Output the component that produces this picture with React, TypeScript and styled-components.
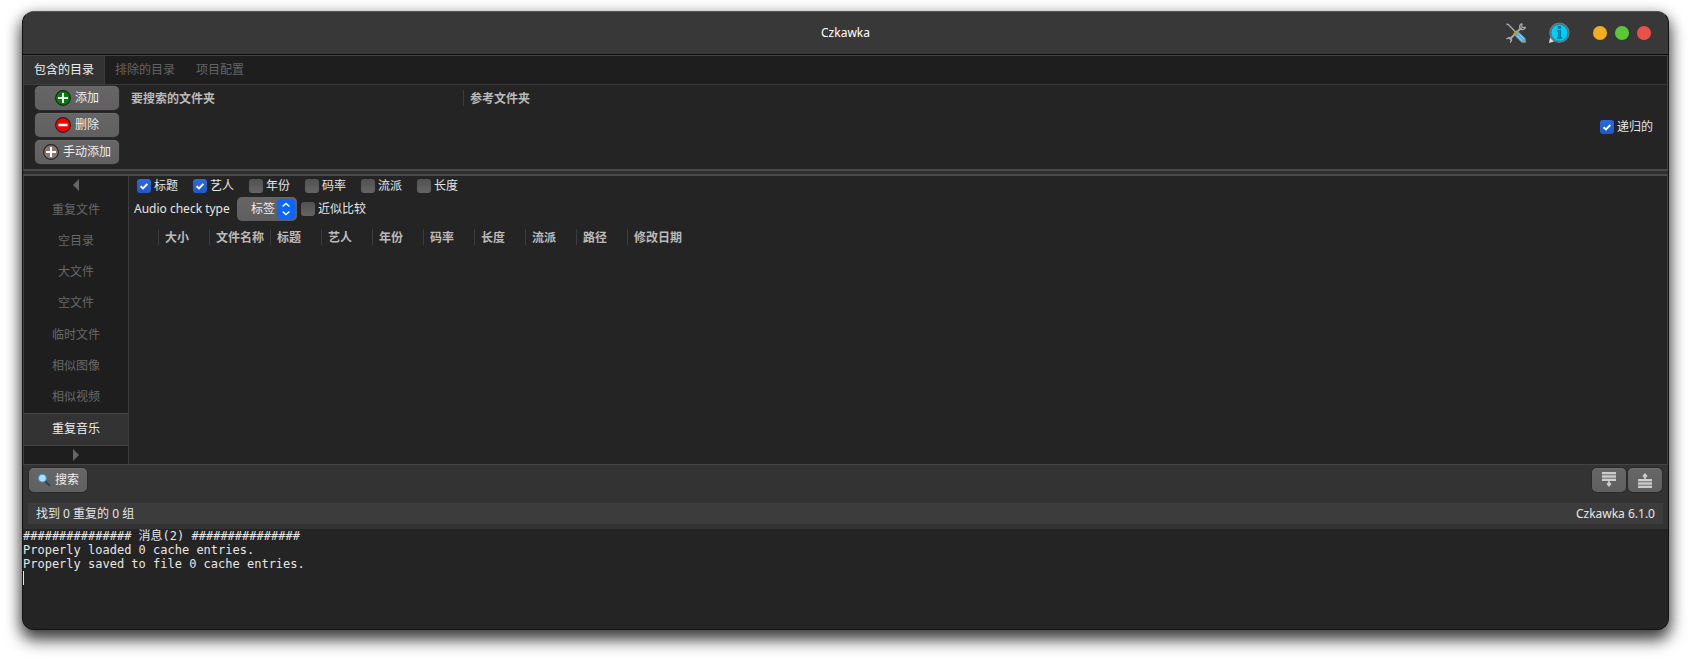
import React, { useState } from 'react';
import styled, { createGlobalStyle } from 'styled-components';

const GlobalStyle = createGlobalStyle`
  * { box-sizing: border-box; }
  body {
    margin: 0;
    background: #fff;
    color: #e6e6e6;
    font: 12px/16px "Noto Sans", "Noto Sans CJK SC", sans-serif;
  }
  button, select, textarea { font: inherit; color: inherit; margin: 0; padding: 0; border: 0; background: none; }
`;

const Window = styled.main`
  margin: 11px 22px 38px;
  border: 1px solid #121212;
  border-top-color: #565656;
  border-radius: 12px;
  overflow: hidden;
  background: #333;
  box-shadow: 0 9px 16px 1px rgba(0, 0, 0, 0.72), 0 2px 14px rgba(0, 0, 0, 0.2);
`;

const TitleBar = styled.header`
  display: grid;
  grid-template-columns: 1fr auto 1fr;
  align-items: center;
  height: 43px;
  padding: 0 17px;
  background: #383838;
  border-bottom: 1px solid #0c0c0c;
`;

const Title = styled.h1`
  grid-column: 2;
  margin: 0;
  font-size: 12px;
  font-weight: 400;
  color: #fff;
`;

const TitleActions = styled.div`
  display: flex;
  justify-content: flex-end;
  align-items: center;
  gap: 8px;
`;

const ToolGroup = styled.div`
  display: flex;
  gap: 21px;
  margin-right: 15px;
`;

const ToolButton = styled.button`
  display: flex;
  width: 22px;
  height: 22px;
`;

const WindowDot = styled.button<{ $color: string }>`
  width: 14px;
  height: 14px;
  border-radius: 50%;
  background: ${(p) => p.$color};
`;

const Notebook = styled.section`
  border: 1px solid #444;
  border-bottom: 2px solid #4a4a4a;
  background: #242424;
`;

const TabBar = styled.div`
  display: flex;
  height: 29px;
  background: #1e1e1e;
  border-bottom: 1px solid #3c3c3c;
`;

const Tab = styled.button<{ $active: boolean }>`
  padding: 0 10px;
  color: ${(p) => (p.$active ? '#eee' : '#646464')};
  background: ${(p) => (p.$active ? '#333' : 'transparent')};
  border-right: 1px solid ${(p) => (p.$active ? '#3c3c3c' : 'transparent')};
`;

const FolderArea = styled.div`
  display: flex;
  align-items: flex-start;
  padding: 1px 14px 1px 11px;
`;

const ButtonStack = styled.div`
  display: flex;
  flex-direction: column;
  gap: 3px;
  width: 84px;
  padding-bottom: 4px;
`;

const PushButton = styled.button`
  display: flex;
  align-items: center;
  justify-content: center;
  gap: 4px;
  height: 24px;
  padding: 0 8px;
  border-radius: 5px;
  background: linear-gradient(#666, #606060);
  box-shadow: 0 0 0 1px #2a2a2a, inset 0 1px 0 #6c6c6c;
  color: #eee;
`;

const Tree = styled.table`
  border-collapse: collapse;
  table-layout: fixed;
`;

const HeadCell = styled.th<{ $w: number }>`
  width: ${(p) => p.$w}px;
  height: 24px;
  padding: 0;
  text-align: left;
  font-weight: 700;
  line-height: 18px;
  color: #bababa;
  white-space: nowrap;

  & > span {
    display: block;
    height: 16px;
    padding-left: 6px;
    border-right: 1px solid #3c3c3c;
  }
  &:last-child > span { border-right: 0; }
`;

const Spacer = styled.div`
  flex: 1;
`;

const CheckLabel = styled.label`
  display: flex;
  align-items: center;
  gap: 3px;
`;

const RecursiveSlot = styled.div`
  align-self: center;
`;

const Check = styled.span`
  display: grid;
  width: 14px;
  height: 14px;

  & > * { grid-area: 1 / 1; }
  & > svg { pointer-events: none; opacity: 0; }
  & > input:checked + svg { opacity: 1; }
`;

const CheckInput = styled.input`
  appearance: none;
  width: 14px;
  height: 14px;
  margin: 0;
  border-radius: 3px;
  background: linear-gradient(#525252, #646464);
  &:checked { background: linear-gradient(#2a6ae0, #1f59c4); }
`;

const PaneHandle = styled.div`
  height: 3px;
  background: #2f2f2f;
`;

const Workspace = styled.section`
  display: flex;
  border: 1px solid #444;
  border-top: 2px solid #4a4a4a;
  background: #242424;
`;

const SideNav = styled.nav`
  display: flex;
  flex-direction: column;
  width: 105px;
  height: 288px;
  background: #1e1e1e;
  border-right: 1px solid #3c3c3c;
`;

const NavList = styled.div`
  flex: 1;
  display: flex;
  flex-direction: column;
  justify-content: space-between;
`;

const ArrowButton = styled.button`
  display: flex;
  justify-content: center;
  height: 18px;
  padding-top: 3px;
`;

const NavItem = styled.button<{ $active: boolean }>`
  height: ${(p) => (p.$active ? 33 : 31)}px;
  color: ${(p) => (p.$active ? '#eee' : '#686868')};
  background: ${(p) => (p.$active ? '#333' : 'transparent')};
  border: solid ${(p) => (p.$active ? '#444' : 'transparent')};
  border-width: 1px 0;
`;

const Panel = styled.div`
  flex: 1;
  min-width: 0;
`;

const CheckRow = styled.div`
  display: flex;
  align-items: center;
  gap: 15px;
  height: 20px;
  padding-left: 8px;
`;

const MethodRow = styled.div`
  display: flex;
  align-items: center;
  gap: 4px;
  height: 26px;
  padding-left: 5px;
`;

const MethodLabel = styled.label`
  min-width: 99px;
`;

const SelectBox = styled.div`
  display: grid;
  align-items: center;
  width: 60px;
  height: 24px;
  border-radius: 5px;
  background: linear-gradient(#666, #5e5e5e);

  & > * { grid-area: 1 / 1; }
  & > svg { justify-self: end; margin-right: 2px; pointer-events: none; }
`;

const Select = styled.select`
  appearance: none;
  width: 60px;
  height: 24px;
  padding-left: 14px;
  color: #eee;
`;

const ResultArea = styled.div`
  padding-top: 3px;
`;

const ActionBar = styled.div`
  display: flex;
  gap: 2px;
  padding: 3px 6px 0;
`;

const SquareButton = styled(PushButton)`
  width: 34px;
`;

const SearchButton = styled(PushButton)`
  width: 58px;
`;

const StatusBar = styled.footer`
  display: flex;
  justify-content: space-between;
  align-items: center;
  height: 21px;
  margin: 11px 5px 5px;
  padding: 0 8px;
  background: #3c3c3c;
`;

const Log = styled.section`
  min-height: 100px;
  background: #242424;
  font: 12px/14px "DejaVu Sans Mono", "Noto Sans CJK SC", monospace;
`;

const LogText = styled.textarea`
  display: block;
  width: 100%;
  height: 42px;
  resize: none;
  overflow: hidden;
  outline: 0;
`;

const Caret = styled.div`
  width: 1px;
  height: 14px;
  background: #e6e6e6;
`;

function Checkbox({ label, initial = false }: { label: string; initial?: boolean }) {
  const [on, setOn] = useState(initial);
  return (
    <CheckLabel>
      <Check>
        <CheckInput type="checkbox" checked={on} onChange={(e) => setOn(e.target.checked)} />
        <svg width="14" height="14" viewBox="0 0 14 14">
          <path d="M3.6 7.2 6 9.4 10.4 4.9" fill="none" stroke="#fff" strokeWidth="2" />
        </svg>
      </Check>
      {label}
    </CheckLabel>
  );
}

function CircleIcon({ color, plus }: { color: string; plus: boolean }) {
  return (
    <svg width="16" height="16" viewBox="0 0 16 16">
      <circle cx="8" cy="8" r="7.4" fill={color} stroke="#222" strokeWidth="1.1" />
      <path d={plus ? 'M3 8H13M8 3V13' : 'M3.5 8H12.5'} stroke="#fff" strokeWidth={plus ? 2 : 2.6} />
    </svg>
  );
}

function ToolsIcon() {
  return (
    <svg width="22" height="22" viewBox="0 0 22 22">
      <path d="M4.6 17.4 16.4 5.6" stroke="#aaa" strokeWidth="2" />
      <path d="M17.2 1.6Q14.2 2.6 14.6 5.6L16.4 7.4Q19.4 8.2 20.6 5.2M17.2 1.6 16.6 4.2 18 5.6 20.6 5.2" fill="none" stroke="#aaa" strokeWidth="1.2" />
      <path d="M1.4 16.8Q4 14.4 6.4 15.6Q7.8 18 5.4 20.6L6 18 4 16.2Z" fill="#999" stroke="#aaa" />
      <path d="M1.5 2 3.4 2.6 11 10.6" fill="none" stroke="#aaa" strokeWidth="1.4" />
      <path d="M9 13 12.6 9.4" stroke="#c79b22" strokeWidth="3" />
      <path d="M13 13 17.8 17.8" stroke="#5fabd8" strokeWidth="5.6" strokeLinecap="round" />
      <path d="M12.4 14 17 18.6M14.4 12.4 19 17" stroke="#a5d8f2" strokeWidth="1" />
      <path d="M18 20.8 20.8 18.4V20.8Z" fill="#c79b22" />
    </svg>
  );
}

function InfoIcon() {
  return (
    <svg width="22" height="22" viewBox="0 0 22 22">
      <path d="M1 21 2 15.5 6 19.4Z" fill="#ddd" />
      <circle cx="11.4" cy="10.8" r="9.4" fill="#00ccff" stroke="#6c787c" strokeWidth="1.6" />
      <circle cx="11.4" cy="10.8" r="8.4" fill="none" stroke="#0a5568" strokeWidth="0.5" />
      <path d="M10.2 4.6H12.6V6.6H10.2ZM9.4 8.4H12.6V15.4H13.8V16.6H9.2V15.4H10.4V9.6H9.4Z" fill="#0a8cad" stroke="#064a5c" strokeWidth="0.5" />
    </svg>
  );
}

function SearchIcon() {
  return (
    <svg width="14" height="14" viewBox="0 0 14 14">
      <path d="M8.6 8.6 12.2 12" stroke="#154a78" strokeWidth="2.2" strokeLinecap="round" />
      <circle cx="5.4" cy="5.2" r="4" fill="#a9e1fb" stroke="#3a8cc4" />
    </svg>
  );
}

function ListIcon({ up }: { up: boolean }) {
  return (
    <svg width="14" height="16" viewBox="0 0 14 16">
      <g transform={up ? 'matrix(1 0 0 -1 0 16)' : undefined}>
        <path d="M0 0H14V9H0Z" fill="#8c8c8c" />
        <path d="M0 1H14M0 4.5H14M0 8H14" stroke="#ccc" strokeWidth="1.8" />
        <path d="M6.2 9H7.8V10.2L9.6 12 7 15 4.4 12 6.2 10.2Z" fill="#ccc" />
      </g>
    </svg>
  );
}

const folderTabs = ['包含的目录', '排除的目录', '项目配置'];
const tools = ['重复文件', '空目录', '大文件', '空文件', '临时文件', '相似图像', '相似视频', '重复音乐'];
const columns: [string, number][] = [
  ['', 30], ['大小', 51], ['文件名称', 61], ['标题', 51], ['艺人', 51], ['年份', 51],
  ['码率', 51], ['长度', 51], ['流派', 51], ['路径', 51], ['修改日期', 80],
];
const logText =
  '############### 消息(2) ###############\nProperly loaded 0 cache entries.\nProperly saved to file 0 cache entries.';

export default function App() {
  const [tab, setTab] = useState(0);
  const [tool, setTool] = useState(7);

  return (
    <>
      <GlobalStyle />
      <Window>
        <TitleBar>
          <Title>Czkawka</Title>
          <TitleActions>
            <ToolGroup>
              <ToolButton aria-label="设置"><ToolsIcon /></ToolButton>
              <ToolButton aria-label="关于"><InfoIcon /></ToolButton>
            </ToolGroup>
            <WindowDot $color="#f2ae1f" aria-label="最小化" />
            <WindowDot $color="#58c837" aria-label="最大化" />
            <WindowDot $color="#ec5049" aria-label="关闭" />
          </TitleActions>
        </TitleBar>

        <Notebook>
          <TabBar role="tablist">
            {folderTabs.map((name, i) => (
              <Tab key={name} role="tab" aria-selected={tab === i} $active={tab === i} onClick={() => setTab(i)}>
                {name}
              </Tab>
            ))}
          </TabBar>
          <FolderArea>
            <ButtonStack>
              <PushButton><CircleIcon color="#008000" plus />添加</PushButton>
              <PushButton><CircleIcon color="#f80000" plus={false} />删除</PushButton>
              <PushButton><CircleIcon color="#8d776c" plus />手动添加</PushButton>
            </ButtonStack>
            <Tree>
              <thead>
                <tr>
                  <HeadCell $w={6} aria-hidden="true" />
                  <HeadCell $w={339}><span>要搜索的文件夹</span></HeadCell>
                  <HeadCell $w={80}><span>参考文件夹</span></HeadCell>
                </tr>
              </thead>
            </Tree>
            <Spacer />
            <RecursiveSlot><Checkbox label="递归的" initial /></RecursiveSlot>
          </FolderArea>
        </Notebook>

        <PaneHandle />

        <Workspace>
          <SideNav>
            <ArrowButton aria-label="上一个">
              <svg width="6" height="12" viewBox="0 0 6 12"><path d="M6 0V12L0 6Z" fill="#666" /></svg>
            </ArrowButton>
            <NavList>
              {tools.map((name, i) => (
                <NavItem key={name} $active={tool === i} onClick={() => setTool(i)}>{name}</NavItem>
              ))}
            </NavList>
            <ArrowButton aria-label="下一个">
              <svg width="6" height="12" viewBox="0 0 6 12"><path d="M0 0V12L6 6Z" fill="#666" /></svg>
            </ArrowButton>
          </SideNav>
          <Panel>
            <CheckRow>
              <Checkbox label="标题" initial />
              <Checkbox label="艺人" initial />
              <Checkbox label="年份" />
              <Checkbox label="码率" />
              <Checkbox label="流派" />
              <Checkbox label="长度" />
            </CheckRow>
            <MethodRow>
              <MethodLabel htmlFor="method">Audio check type</MethodLabel>
              <SelectBox>
                <Select id="method" defaultValue="标签"><option>标签</option></Select>
                <svg width="18" height="20" viewBox="0 0 18 20">
                  <rect width="18" height="20" rx="4" fill="#0a66ff" />
                  <path d="M5.6 7.6 9 4.4 12.4 7.6M5.6 12.4 9 15.6 12.4 12.4" fill="none" stroke="#fff" strokeWidth="1.4" />
                </svg>
              </SelectBox>
              <Checkbox label="近似比较" />
            </MethodRow>
            <ResultArea>
              <Tree>
                <thead>
                  <tr>
                    {columns.map(([name, w]) => (
                      <HeadCell key={name} $w={w}><span>{name}</span></HeadCell>
                    ))}
                  </tr>
                </thead>
              </Tree>
            </ResultArea>
          </Panel>
        </Workspace>

        <ActionBar>
          <SearchButton><SearchIcon />搜索</SearchButton>
          <Spacer />
          <SquareButton aria-label="向下"><ListIcon up={false} /></SquareButton>
          <SquareButton aria-label="向上"><ListIcon up /></SquareButton>
        </ActionBar>

        <StatusBar>
          <span>找到 0 重复的 0 组</span>
          <span>Czkawka 6.1.0</span>
        </StatusBar>

        <Log>
          <LogText readOnly aria-label="消息" defaultValue={logText} />
          <Caret />
        </Log>
      </Window>
    </>
  );
}
